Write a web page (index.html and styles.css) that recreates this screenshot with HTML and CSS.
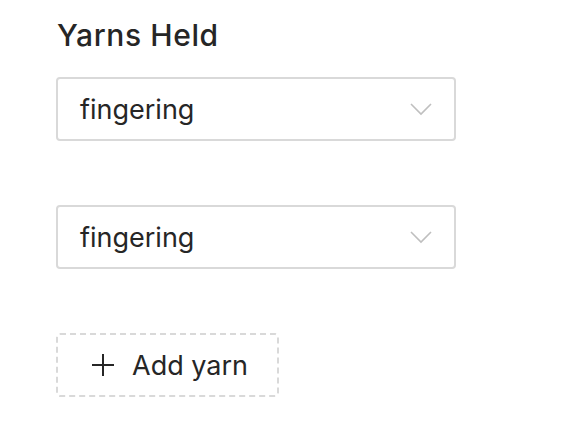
FILE: index.html
```html
<!DOCTYPE html>
<html>
<head>
<meta charset="utf-8">
<link rel="stylesheet" href="styles.css">
</head>
<body>
<div class="form">
  <h2 class="title">Yarns Held</h2>
  <div class="select">
    <span class="value">fingering</span>
    <svg class="chev" width="22" height="14" viewBox="0 0 22 14"><path d="M1 2 L11 12 L21 2" fill="none" stroke="#bfbfbf" stroke-width="1.6"/></svg>
  </div>
  <div class="select second">
    <span class="value">fingering</span>
    <svg class="chev" width="22" height="14" viewBox="0 0 22 14"><path d="M1 2 L11 12 L21 2" fill="none" stroke="#bfbfbf" stroke-width="1.6"/></svg>
  </div>
  <button class="add">
    <svg width="24" height="24" viewBox="0 0 24 24"><path d="M12 1 V23 M1 12 H23" stroke="#262626" stroke-width="2"/></svg>
    <span>Add yarn</span>
  </button>
</div>
</body>
</html>
```
FILE: styles.css
```css
html, body {
  margin: 0;
  padding: 0;
  background: #fff;
}
body {
  font-family: Inter, "Noto Sans", sans-serif;
  color: #262626;
}
.form {
  display: flex;
  flex-direction: column;
  align-items: flex-start;
  padding: 16px 0 0 56px;
}
.title {
  margin: 0 0 22px 1px;
  font-size: 30px;
  font-weight: 500;
  line-height: 39px;
  letter-spacing: 0.6px;
  color: #262626;
}
.select {
  box-sizing: border-box;
  width: 400px;
  height: 64px;
  border: 2px solid #d9d9d9;
  border-radius: 4px;
  display: flex;
  align-items: center;
  justify-content: space-between;
  padding: 0 22px 0 22px;
}
.select.second {
  margin-top: 64px;
}
.value {
  font-size: 27px;
  color: #262626;
}
.chev {
  display: block;
}
.add {
  margin-top: 64px;
  box-sizing: border-box;
  height: 64px;
  width: 223px;
  border: 2px dashed #d9d9d9;
  border-radius: 4px;
  background: #fff;
  display: flex;
  align-items: center;
  gap: 17px;
  padding: 0 0 0 33px;
  font-family: Inter, "Noto Sans", sans-serif;
  font-size: 27px;
  color: #262626;
}
.add svg {
  display: block;
}
```
